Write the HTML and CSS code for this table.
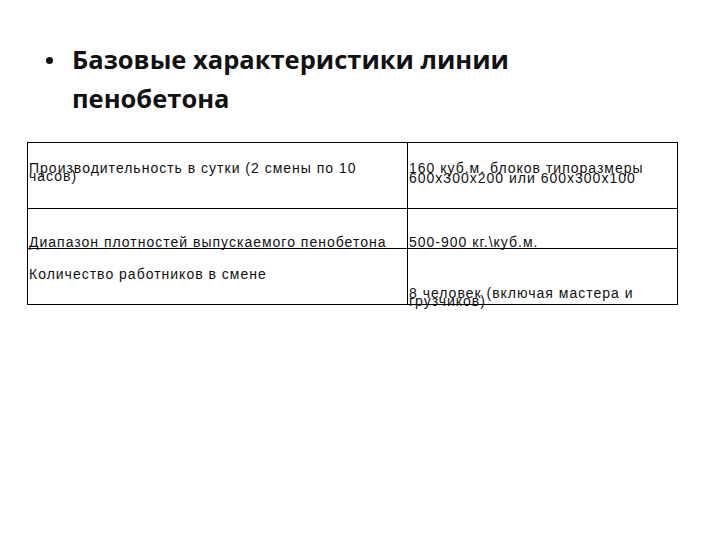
FILE: index.html
```html
<!DOCTYPE html>
<html lang="ru">
<head>
<meta charset="utf-8">
<title>Базовые характеристики линии пенобетона</title>
<link rel="stylesheet" href="styles.css">
</head>
<body>
<div class="slide">
  <div class="title">
    <span class="bullet"></span>
    <h1 class="title-text">Базовые характеристики линии<br>пенобетона</h1>
  </div>
  <div class="table">
    <div class="cell c-left r1">Производительность в сутки (2 смены по 10<br>часов)</div>
    <div class="cell c-right r1 loose">160 куб.м. блоков типоразмеры<br>600х300х200 или 600х300х100</div>
    <div class="cell c-left r2">Диапазон плотностей выпускаемого пенобетона</div>
    <div class="cell c-right r2">500-900 кг.\куб.м.</div>
    <div class="cell c-left r3">Количество работников в смене</div>
    <div class="cell c-right r3 low">8 человек (включая мастера и<br>грузчиков)</div>
  </div>
</div>
</body>
</html>
```
FILE: styles.css
```css
html, body {
  margin: 0;
  padding: 0;
  background: #ffffff;
}
.slide {
  width: 720px;
  height: 540px;
  padding-top: 40px;
  box-sizing: border-box;
}
.title {
  display: flex;
  align-items: flex-start;
}
.bullet {
  flex: none;
  width: 7px;
  height: 7px;
  border-radius: 50%;
  background: #111;
  margin-left: 46px;
  margin-top: 17px;
}
.title-text {
  margin: 0 0 0 19px;
  font-family: "Open Sans", sans-serif;
  font-weight: 700;
  font-size: 25.5px;
  line-height: 39px;
  color: #111;
}
.table {
  margin-top: 24px;
  margin-left: 27px;
  width: 651px;
  border: 1px solid #000;
  box-sizing: border-box;
  display: grid;
  grid-template-columns: 379px 1fr;
  grid-template-rows: 65px 40px 56px;
  font-family: "Liberation Sans", Arial, sans-serif;
  font-size: 14px;
  letter-spacing: 1px;
  line-height: 8px;
  color: #111;
}
.cell {
  box-sizing: border-box;
  white-space: nowrap;
}
.c-left { padding-left: 1px; }
.c-right { border-left: 1px solid #000; padding-left: 1px; }
.r2, .r3 { border-top: 1px solid #000; }
.r1 { padding-top: 21px; }
.r1.loose { line-height: 10px; padding-top: 20px; }
.r2 { padding-top: 29px; }
.r3 { padding-top: 21px; }
.r3.low { padding-top: 40px; }
```
